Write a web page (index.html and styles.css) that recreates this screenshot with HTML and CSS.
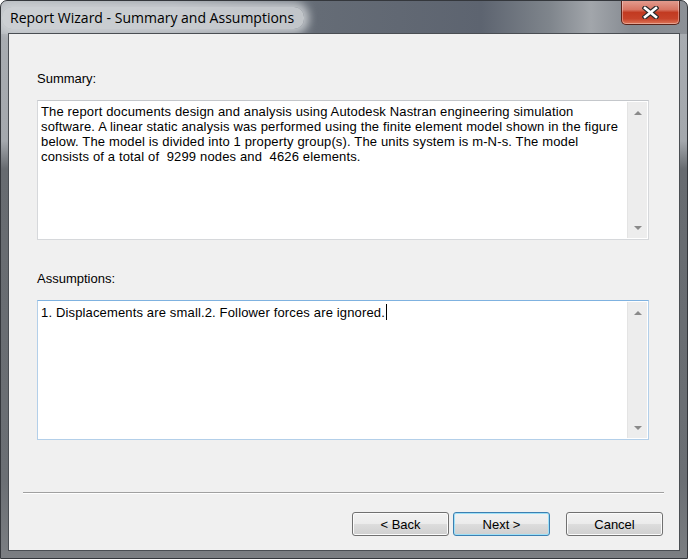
FILE: index.html
```html
<!DOCTYPE html>
<html lang="en">
<head>
  <meta charset="UTF-8">
  <title>Report Wizard - Summary and Assumptions</title>
  <link rel="stylesheet" href="styles.css">
</head>
<body>

  <!-- Dialog window -->
  <div class="window">

    <!-- Title bar -->
    <div class="titlebar">
      <span class="title">Report Wizard - Summary and Assumptions</span>
      <button class="close-btn" title="Close">
        <svg width="17" height="13" viewBox="0 0 17 13">
          <path d="M3 2 L14 11 M14 2 L3 11" stroke="#2e2e2e" stroke-width="5" stroke-linecap="square" fill="none"/>
          <path d="M3 2 L14 11 M14 2 L3 11" stroke="#ffffff" stroke-width="2.6" stroke-linecap="square" fill="none"/>
        </svg>
      </button>
    </div>

    <!-- Client area -->
    <div class="client">
      <div class="fields">
        <label class="field-label" for="summary">Summary:</label>
        <div class="textbox" id="summary">
          <div class="textbox-text">The report documents design and analysis using Autodesk Nastran engineering simulation<br>software. A linear static analysis was performed using the finite element model shown in the figure<br>below. The model is divided into 1 property group(s). The units system is m-N-s. The model<br>consists of a total of &nbsp;9299 nodes and &nbsp;4626 elements.</div>
          <div class="scrollbar">
            <span class="arrow-up"></span>
            <span class="arrow-down"></span>
          </div>
        </div>

        <label class="field-label assumptions-label" for="assumptions">Assumptions:</label>
        <div class="textbox focused" id="assumptions">
          <div class="textbox-text">1. Displacements are small.2. Follower forces are ignored.<span class="caret"></span></div>
          <div class="scrollbar">
            <span class="arrow-up"></span>
            <span class="arrow-down"></span>
          </div>
        </div>
      </div>

      <div class="separator"></div>

      <div class="buttons">
        <button class="btn">&lt; Back</button>
        <button class="btn btn-default">Next &gt;</button>
        <button class="btn btn-cancel">Cancel</button>
      </div>
    </div>

  </div>

</body>
</html>
```

FILE: styles.css
```css
/* General styles */
body {
  margin: 0;
  background-color: #fff;
  font-family: "Liberation Sans", Arial, sans-serif;
  font-size: 13px;
  color: #000;
}

/* Window frame */
.window {
  width: 688px;
  height: 559px;
  box-sizing: border-box;
  border: 1px solid #34373c;
  border-radius: 7px 7px 0 0;
  display: flex;
  flex-direction: column;
  overflow: hidden;
  background:
    linear-gradient(to right, #b4b8bd 0%, #9a9fa6 25%, #656c76 46%, #5d6470 70%, #7f858c 80%, #a2a6ab 86%, #858a91 92%, #8c9096 100%) top / 100% 33px no-repeat,
    linear-gradient(#a9adb2 0, #a4a8ad 140px, #676b70 168px, #6b6f74 480px, #7b7e82 100%);
}

.titlebar {
  height: 32px;
  display: flex;
  justify-content: space-between;
  align-items: flex-start;
  padding: 0 7px 0 1px;
}

.title {
  font-family: "Open Sans", sans-serif;
  font-size: 14px;
  line-height: 20px;
  margin-top: 6px;
  padding: 1px 10px 1px 8px;
  color: #000;
  background-color: rgba(208, 211, 215, 0.85);
  border-radius: 10px;
  box-shadow: 0 0 8px 5px rgba(208, 211, 215, 0.85);
}

.close-btn {
  width: 59px;
  height: 25px;
  margin-top: -1px;
  padding: 0;
  border: 1px solid #5b2218;
  border-top: none;
  border-radius: 0 0 5px 5px;
  box-shadow: inset 0 0 0 1px rgba(255, 255, 255, 0.35);
  background: linear-gradient(#e3a093 0%, #d77563 40%, #c23a21 52%, #c7432a 78%, #de7659 100%);
  display: flex;
  align-items: center;
  justify-content: center;
  cursor: pointer;
}

/* Client area */
.client {
  flex: 1;
  margin: 0 7px 7px 7px;
  border: 1px solid #4a4e53;
  background-color: #f0f0f0;
  display: flex;
  flex-direction: column;
}

.fields {
  padding: 37px 30px 0 28px;
}

.field-label {
  display: block;
  line-height: 15px;
  margin-bottom: 14px;
}

.assumptions-label {
  margin-top: 31px;
}

.textbox {
  height: 140px;
  box-sizing: border-box;
  border: 1px solid #d6d8db;
  border-top-color: #c4c7cb;
  background-color: #fff;
  display: flex;
}

.textbox.focused {
  border-color: #b3cfe9;
  border-top-color: #7fb2e0;
}

.textbox-text {
  flex: 1;
  padding: 3px 3px;
  line-height: 15px;
  letter-spacing: 0.15px;
}

.caret {
  display: inline-block;
  width: 1px;
  height: 16px;
  margin-left: 1px;
  background-color: #000;
  vertical-align: -3px;
}

.scrollbar {
  width: 20px;
  margin: 1px 1px 1px 0;
  box-sizing: border-box;
  border-left: 1px solid #e4e4e4;
  background-color: #ededed;
  padding: 9px 0 8px;
  display: flex;
  flex-direction: column;
  justify-content: space-between;
  align-items: center;
}

.arrow-up,
.arrow-down {
  width: 0;
  height: 0;
  border-left: 4px solid transparent;
  border-right: 4px solid transparent;
}

.arrow-up {
  border-bottom: 4px solid #8a8a8a;
}

.arrow-down {
  border-top: 4px solid #8a8a8a;
}

/* Footer */
.separator {
  margin: 52px 15px 0 14px;
  border-top: 1px solid #a0a0a0;
  border-bottom: 1px solid #fff;
}

.buttons {
  display: flex;
  justify-content: flex-end;
  gap: 4px;
  padding: 18px 16px 0 0;
}

.btn {
  width: 97px;
  height: 24px;
  padding: 0;
  font-family: "Liberation Sans", Arial, sans-serif;
  font-size: 13px;
  color: #000;
  border: 1px solid #707070;
  border-radius: 3px;
  background: linear-gradient(#f2f2f2 0%, #ebebeb 50%, #dddddd 50%, #cfcfcf 100%);
  box-shadow: inset 0 0 0 1px #fbfbfb;
  cursor: pointer;
}

.btn-default {
  border-color: #3c7fb1;
  box-shadow: inset 0 0 0 1px #9ee0f7;
}

.btn-cancel {
  margin-left: 12px;
}
```
